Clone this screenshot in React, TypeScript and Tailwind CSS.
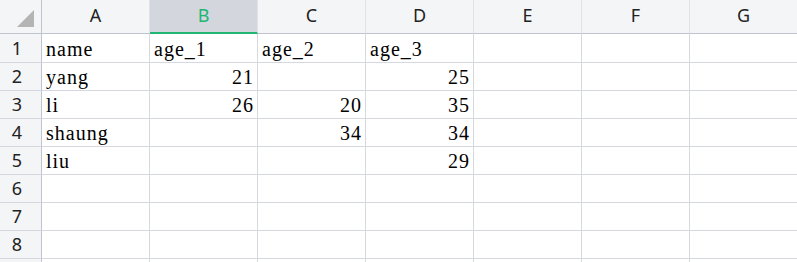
const columns = ["A", "B", "C", "D", "E", "F", "G"];

const rows: (string | number | null)[][] = [
  ["name", "age_1", "age_2", "age_3", null, null, null],
  ["yang", 21, null, 25, null, null, null],
  ["li", 26, 20, 35, null, null, null],
  ["shaung", null, 34, 34, null, null, null],
  ["liu", null, null, 29, null, null, null],
  [null, null, null, null, null, null, null],
  [null, null, null, null, null, null, null],
  [null, null, null, null, null, null, null],
  [null, null, null, null, null, null, null],
];

const selectedCol = 1;

export default function App() {
  return (
    <div className="w-[797px] h-[262px] overflow-hidden bg-white">
      <div className="grid grid-cols-[42px_repeat(7,108px)] w-[798px]">
        {/* corner */}
        <div className="h-[34px] bg-[#f4f5f7] border-r border-b border-[#bfc4cf] flex items-end justify-end pr-[7px] pb-[6px]">
          <div className="w-0 h-0 border-l-[17px] border-l-transparent border-b-[17px] border-b-[#b4b4b4]" />
        </div>
        {columns.map((c, i) =>
          i === selectedCol ? (
            <div
              key={c}
              className="h-[34px] bg-[#d3d6dc] border-r border-[#e0e2e7] border-b-2 border-b-[#21b573] flex items-center justify-center pb-[2px] text-[18px] text-[#21b573] font-['Noto_Sans',sans-serif]"
            >
              {c}
            </div>
          ) : (
            <div
              key={c}
              className="h-[34px] bg-[#f4f5f7] border-r border-[#e0e2e7] border-b border-b-[#bfc4cf] flex items-center justify-center pb-[2px] text-[18px] text-[#222] font-['Noto_Sans',sans-serif]"
            >
              {c}
            </div>
          )
        )}

        {rows.map((row, r) => (
          <div key={r} className="contents">
            <div
              className={`${r === 0 ? "h-[29px]" : "h-[28px]"} bg-[#f4f5f7] border-r border-b border-r-[#bfc4cf] border-b-[#d5d8e0] flex items-center justify-center pr-[7px] text-[18px] text-[#222] font-['Noto_Sans',sans-serif]`}
            >
              {r < 8 ? r + 1 : ""}
            </div>
            {row.map((v, c) => (
              <div
                key={c}
                className={`${r === 0 ? "h-[29px]" : "h-[28px]"} border-r border-b border-[#d5d8e0] flex items-end px-[4px] pb-[1px] text-[20px] leading-[24px] tracking-[1px] text-black font-['Liberation_Serif',serif] ${typeof v === "number" ? "justify-end pr-[3px]" : "justify-start"}`}
              >
                {v}
              </div>
            ))}
          </div>
        ))}
      </div>
    </div>
  );
}
